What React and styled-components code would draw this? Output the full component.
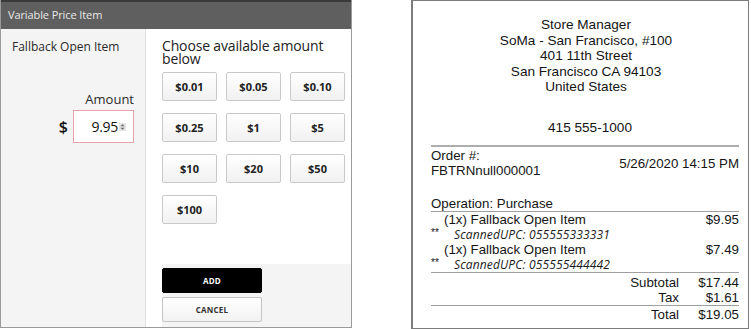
import styled, { createGlobalStyle } from "styled-components"

const Global = createGlobalStyle`
  html, body {
    margin: 0;
    padding: 0;
    background: #ffffff;
  }
  body {
    font-family: "Open Sans", "Liberation Sans", sans-serif;
  }
`;

const Page = styled.div`
  display: flex;
  align-items: flex-start;
  width: 751px;
  height: 329px;
`;

/* ---------- price dialog ---------- */

const Dialog = styled.div`
  width: 352px;
  height: 328px;
  border: 1px solid #9a9a9a;
  border-top: none;
  box-sizing: border-box;
  display: flex;
  flex-direction: column;
`;

const Header = styled.div`
  height: 27px;
  border-top: 2px solid #3a3a3a;
  background: #5f5f5f;
  color: #e8e8e8;
  font-size: 11px;
  line-height: 26px;
  padding-left: 7px;
  letter-spacing: -0.1px;
`;

const Body = styled.div`
  flex: 1;
  display: flex;
`;

const Side = styled.div`
  width: 145px;
  background: #f4f4f4;
  border-right: 1px solid #e2e2e2;
  padding: 9px 11px 0 11px;
  box-sizing: border-box;
  display: flex;
  flex-direction: column;
`;

const ItemName = styled.div`
  font-size: 12px;
  line-height: 18px;
  color: #2a2a2a;
`;

const AmountLabel = styled.div`
  margin-top: 34px;
  text-align: right;
  font-size: 13px;
  line-height: 18px;
  color: #2a2a2a;
`;

const AmountRow = styled.div`
  margin-top: 2px;
  display: flex;
  justify-content: flex-end;
  align-items: center;
  gap: 5px;
`;

const Currency = styled.span`
  font-size: 16px;
  font-weight: 600;
  color: #111;
`;

const AmountBox = styled.div`
  width: 61px;
  height: 33px;
  box-sizing: border-box;
  border: 1px solid #e6a3aa;
  background: #fff;
  display: flex;
  align-items: center;
  justify-content: flex-end;
  padding-right: 7px;
  gap: 1px;
  font-size: 14px;
  letter-spacing: -0.3px;
  color: #111;
`;

const Main = styled.div`
  flex: 1;
  display: flex;
  flex-direction: column;
  padding-top: 10px;
`;

const Prompt = styled.div`
  padding-left: 16px;
  font-size: 14px;
  letter-spacing: -0.15px;
  line-height: 13px;
  color: #222;
  width: 175px;
`;

const Grid = styled.div`
  margin-top: 7px;
  padding-left: 16px;
  display: grid;
  grid-template-columns: repeat(3, 55px);
  column-gap: 9px;
  row-gap: 12px;
`;

const Amount = styled.button`
  height: 29px;
  border: 1px solid #c9c9c9;
  border-radius: 2px;
  background: linear-gradient(#ffffff, #f1f1f1);
  font-family: "Open Sans", sans-serif;
  font-weight: 700;
  font-size: 11px;
  color: #222;
  padding: 0;
`;

const Footer = styled.div`
  margin-top: auto;
  margin-left: 16px;
  background: #f4f4f4;
  padding: 4px 0 5px;
  display: flex;
  flex-direction: column;
  gap: 4px;
`;

const Action = styled.button`
  width: 100px;
  height: 25px;
  border-radius: 2px;
  border: 1px solid ${(p) => (p.$primary ? "#000" : "#c4c4c4")};
  background: ${(p) => (p.$primary ? "#000" : "linear-gradient(#ffffff, #f2f2f2)")};
  color: ${(p) => (p.$primary ? "#fff" : "#333")};
  font-family: "Open Sans", sans-serif;
  font-weight: 700;
  font-size: 8px;
  letter-spacing: 0.2px;
  padding: 0;
`;

/* ---------- receipt ---------- */

const Receipt = styled.div`
  margin-left: 59px;
  width: 338px;
  height: 329px;
  box-sizing: border-box;
  border: 1px solid #7c7c7c;
  border-left-width: 2px;
  padding: 16px 9px 0 18px;
  font-family: "Liberation Sans", Arial, sans-serif;
  font-size: 13.3px;
  color: #151515;
`;

const Store = styled.div`
  text-align: center;
  font-size: 13.6px;
  line-height: 15.5px;
  padding-left: 2px;
`;

const Phone = styled.div`
  margin-top: 25px;
  text-align: center;
  font-size: 13.6px;
  line-height: 15.5px;
  padding-left: 10px;
`;

const Rule = styled.div`
  margin-top: ${(p) => p.$top || 0}px;
  border-top: ${(p) => (p.$thick ? "2px solid #adadad" : "1px solid #a0a0a0")};
`;

const OrderRow = styled.div`
  margin-top: 1px;
  display: flex;
  justify-content: space-between;
  align-items: center;
  line-height: 15px;
`;

const Operation = styled.div`
  margin-top: 18px;
  line-height: 15px;
`;

const Line = styled.div`
  display: flex;
  justify-content: space-between;
  line-height: 15px;
  padding-left: ${(p) => p.$indent || 0}px;
`;

const Note = styled.div`
  display: flex;
  align-items: flex-start;
  line-height: 15px;
`;

const Stars = styled.span`
  width: 23px;
  font-size: 10px;
  line-height: 11px;
`;

const Upc = styled.span`
  font-family: "Open Sans", sans-serif;
  font-style: italic;
  font-size: 12px;
  letter-spacing: 0.15px;
  color: #1a1a1a;
`;

const Totals = styled.div`
  margin-top: ${(p) => p.$top || 0}px;
  display: grid;
  grid-template-columns: 1fr 60px;
  line-height: 15px;
  text-align: right;
`;

const Spinner = () => (
  <svg width="7" height="8" viewBox="0 0 7 8">
    <rect x="0" y="0" width="7" height="8" fill="#e4e4e4" />
    <path d="M1.5 3.2 L3.5 1.2 L5.5 3.2 Z" fill="#666" />
    <path d="M1.5 4.8 L3.5 6.8 L5.5 4.8 Z" fill="#666" />
  </svg>
);

const amounts = ["$0.01", "$0.05", "$0.10", "$0.25", "$1", "$5", "$10", "$20", "$50", "$100"];

const items = [
  { name: "(1x) Fallback Open Item", price: "$9.95", upc: "ScannedUPC: 055555333331" },
  { name: "(1x) Fallback Open Item", price: "$7.49", upc: "ScannedUPC: 055555444442" },
];

export default function App() {
  return (
    <Page>
      <Global />
      <Dialog>
        <Header>Variable Price Item</Header>
        <Body>
          <Side>
            <ItemName>Fallback Open Item</ItemName>
            <AmountLabel>Amount</AmountLabel>
            <AmountRow>
              <Currency>$</Currency>
              <AmountBox>
                9.95
                <Spinner />
              </AmountBox>
            </AmountRow>
          </Side>
          <Main>
            <Prompt>Choose available amount below</Prompt>
            <Grid>
              {amounts.map((a) => (
                <Amount key={a}>{a}</Amount>
              ))}
            </Grid>
            <Footer>
              <Action $primary>ADD</Action>
              <Action>CANCEL</Action>
            </Footer>
          </Main>
        </Body>
      </Dialog>

      <Receipt>
        <Store>
          <div>Store Manager</div>
          <div>SoMa - San Francisco, #100</div>
          <div>401 11th Street</div>
          <div>San Francisco CA 94103</div>
          <div>United States</div>
        </Store>
        <Phone>415 555-1000</Phone>
        <Rule $thick $top={10} />
        <OrderRow>
          <div>
            <div>Order #:</div>
            <div>FBTRNnull000001</div>
          </div>
          <div>5/26/2020 14:15 PM</div>
        </OrderRow>
        <Operation>Operation: Purchase</Operation>
        <Rule />
        {items.map((it, i) => (
          <div key={i}>
            <Line $indent={13}>
              <span>{it.name}</span>
              <span>{it.price}</span>
            </Line>
            <Note>
              <Stars>**</Stars>
              <Upc>{it.upc}</Upc>
            </Note>
          </div>
        ))}
        <Rule />
        <Totals $top={2}>
          <span>Subtotal</span>
          <span>$17.44</span>
          <span>Tax</span>
          <span>$1.61</span>
        </Totals>
        <Rule />
        <Totals $top={1}>
          <span>Total</span>
          <span>$19.05</span>
        </Totals>
      </Receipt>
    </Page>
  )
}
